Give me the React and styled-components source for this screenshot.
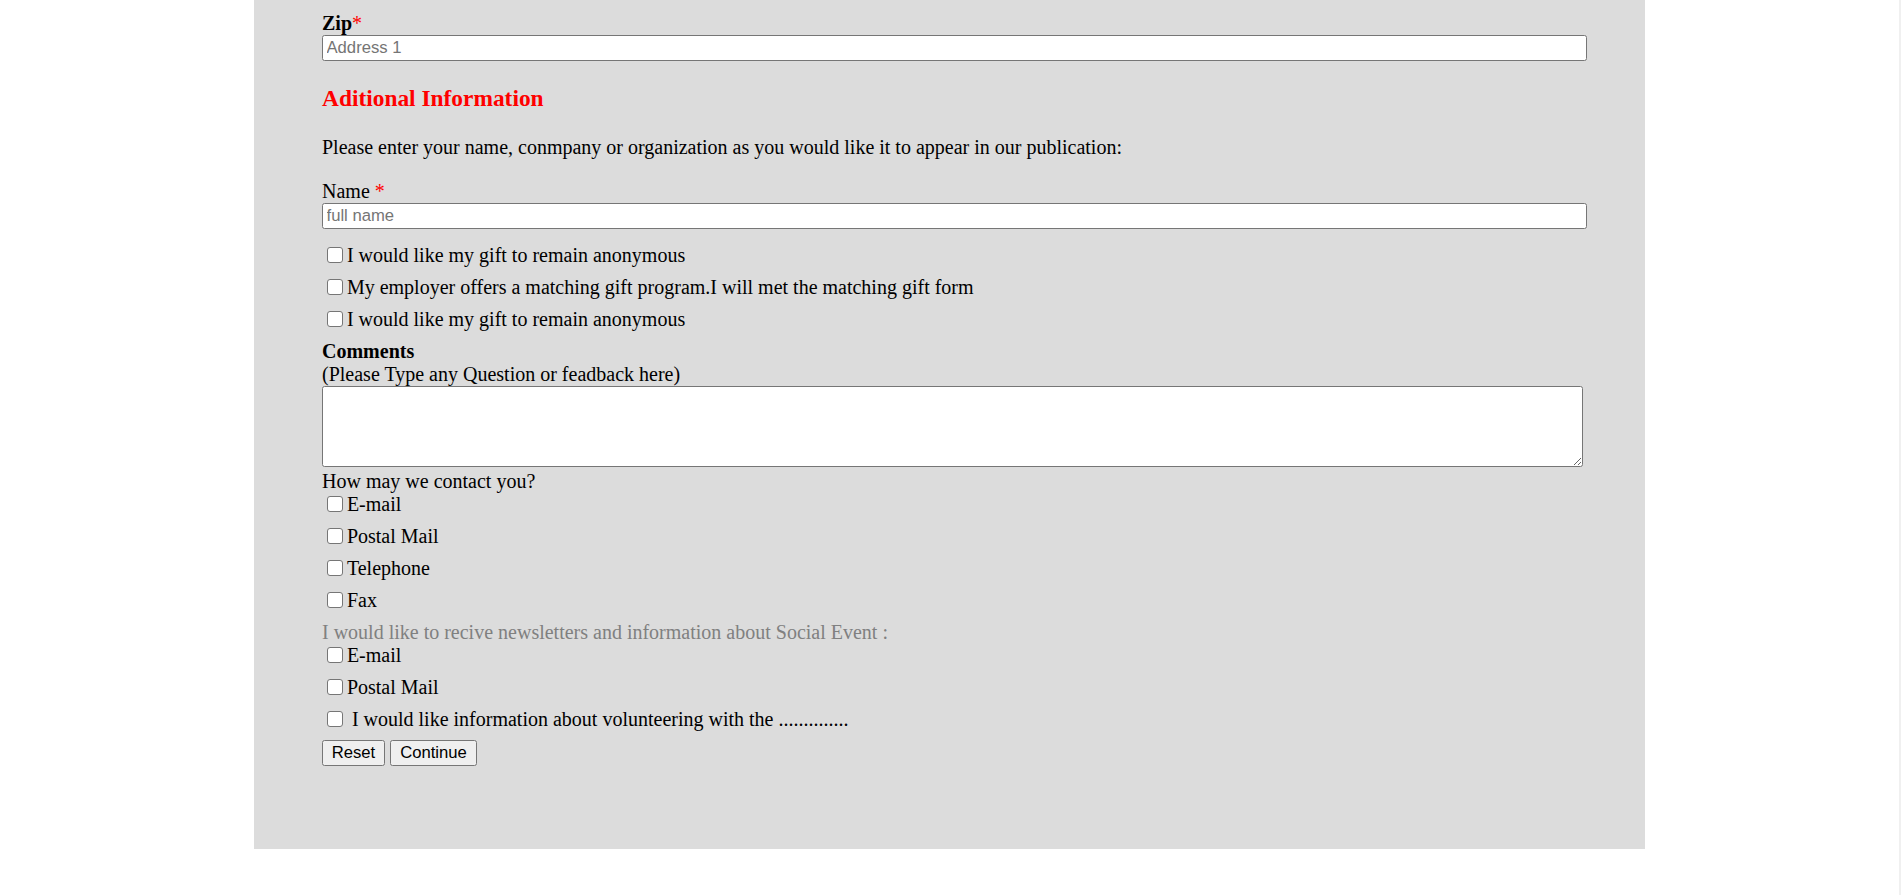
import React from "react";
import styled, { createGlobalStyle } from "styled-components";

const GlobalStyle = createGlobalStyle`
  html {
    min-height: 100%;
    background: #ffffff;
    border-right: 2px solid #f0f0f0;
  }
  body {
    margin: 0;
    font-family: "Liberation Serif", "Times New Roman", serif;
    font-size: 20px;
    line-height: 23px;
    color: #000000;
    background: #ffffff;
  }
  * { box-sizing: border-box; }
`;

const Page = styled.div`
  padding-bottom: 46px;
`;

const Panel = styled.section`
  margin-left: 254px;
  width: 1391px;
  background: #dcdcdc;
  padding: 12px 0 83px 68px;
`;

const FieldLabel = styled.label`
  display: block;
  line-height: 23px;
  font-weight: ${(p) => (p.$bold ? 700 : 400)};
`;

const Required = styled.span`
  color: #ff0000;
  font-weight: 400;
`;

const TextInput = styled.input`
  display: block;
  width: 1265px;
  height: 26.3px;
  margin: 0;
  padding: 0 3.5px;
  border: 1px solid #767676;
  border-radius: 2.5px;
  background: #ffffff;
  font-family: "Liberation Sans", Arial, sans-serif;
  font-size: 16.67px;
  color: #000;
  &::placeholder {
    color: #757575;
  }
`;

const SectionTitle = styled.h3`
  margin: 23.5px 0 24.5px;
  font-size: 23.4px;
  line-height: 27px;
  font-weight: 700;
  color: #ff0000;
`;

const Paragraph = styled.p`
  margin: 0 0 20.3px;
  line-height: 23px;
`;

const Group = styled.div`
  margin-top: ${(p) => p.$top || 0}px;
`;

const CheckRow = styled.label`
  display: flex;
  align-items: center;
  height: 23px;
  margin-bottom: 9px;
  line-height: 23px;
  white-space: pre;
`;

const Checkbox = styled.input.attrs({ type: "checkbox" })`
  appearance: none;
  -webkit-appearance: none;
  width: 16px;
  height: 16px;
  margin: 0 3.9px 0 5px;
  flex: none;
  border: 1.25px solid #767676;
  border-radius: 3px;
  background: #ffffff;
`;

const Hint = styled.div`
  line-height: 23px;
  color: ${(p) => (p.$muted ? "#808080" : "#000000")};
  margin-top: ${(p) => p.$top || 0}px;
`;

const TextArea = styled.textarea`
  display: block;
  width: 1261px;
  height: 81.5px;
  margin: 0 0 2.4px;
  border: 1px solid #767676;
  border-radius: 2.5px;
  background: #ffffff;
  font-family: "Liberation Mono", monospace;
  font-size: 16.67px;
`;

const ButtonBar = styled.div`
  display: flex;
  gap: 5.6px;
`;

const Button = styled.button`
  height: 26.3px;
  padding: 0 8.7px;
  border: 1px solid #767676;
  border-radius: 2.5px;
  background: #efefef;
  font-family: "Liberation Sans", Arial, sans-serif;
  font-size: 16.67px;
  color: #000;
`;

const CheckOption = ({ children }) => (
  <CheckRow>
    <Checkbox />
    {children}
  </CheckRow>
);

export default function App() {
  return (
    <Page>
      <GlobalStyle />
      <Panel>
        <FieldLabel $bold>
          Zip<Required>*</Required>
        </FieldLabel>
        <TextInput placeholder="Address 1" />

        <SectionTitle>Aditional Information</SectionTitle>
        <Paragraph>
          Please enter your name, conmpany or organization as you would like it to appear in our publication:
        </Paragraph>

        <FieldLabel>
          Name <Required>*</Required>
        </FieldLabel>
        <TextInput placeholder="full name" />

        <Group $top={15}>
          <CheckOption>I would like my gift to remain anonymous</CheckOption>
          <CheckOption>My employer offers a matching gift program.I will met the matching gift form</CheckOption>
          <CheckOption>I would like my gift to remain anonymous</CheckOption>
        </Group>

        <FieldLabel $bold>Comments</FieldLabel>
        <Hint>(Please Type any Question or feadback here)</Hint>
        <TextArea />

        <Hint>How may we contact you?</Hint>
        <Group>
          <CheckOption>E-mail</CheckOption>
          <CheckOption>Postal Mail</CheckOption>
          <CheckOption>Telephone</CheckOption>
          <CheckOption>Fax</CheckOption>
        </Group>

        <Hint $muted $top={0.5}>
          I would like to recive newsletters and information about Social Event :
        </Hint>
        <Group>
          <CheckOption>E-mail</CheckOption>
          <CheckOption>Postal Mail</CheckOption>
          <CheckOption> I would like information about volunteering with the ..............</CheckOption>
        </Group>

        <ButtonBar>
          <Button type="reset">Reset</Button>
          <Button type="button">Continue</Button>
        </ButtonBar>
      </Panel>
    </Page>
  );
}
